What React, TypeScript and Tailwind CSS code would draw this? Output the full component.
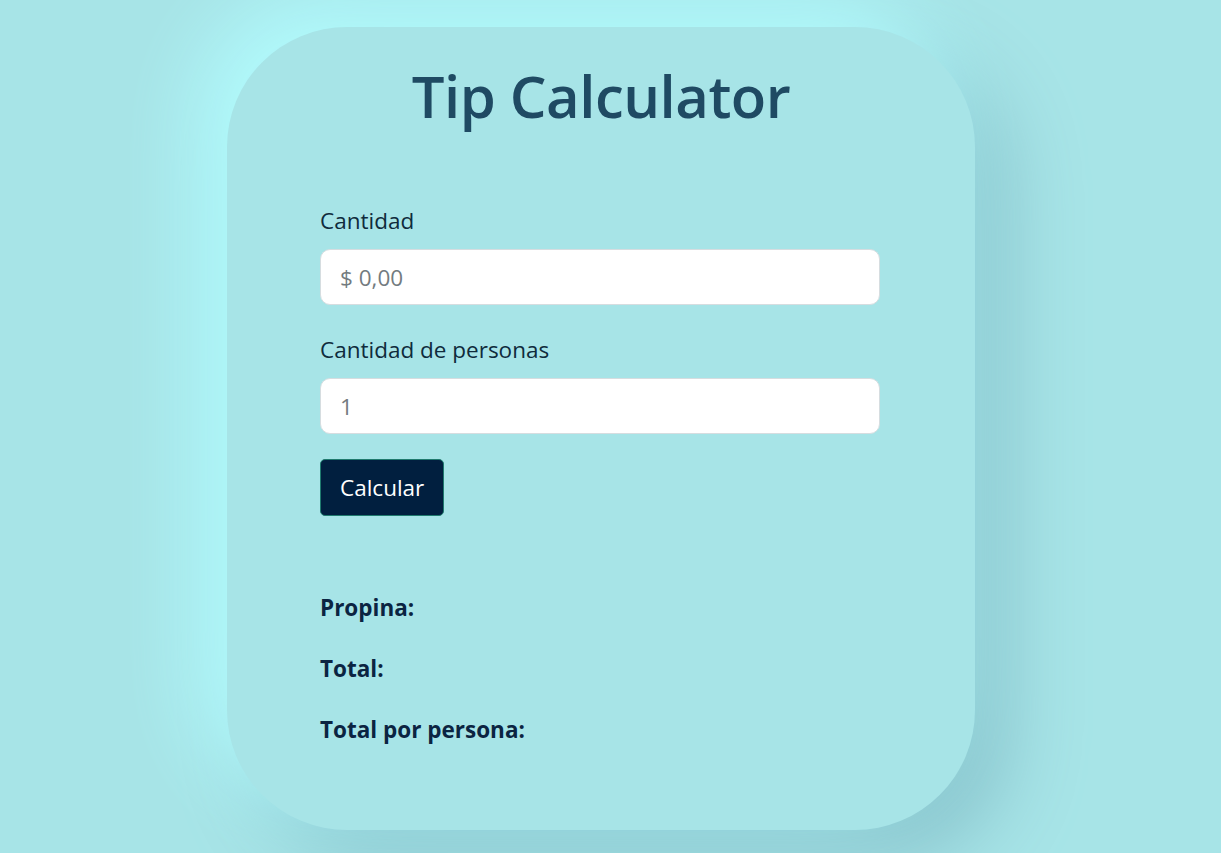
export default function App() {
  return (
    <div
      className="min-h-[853px] w-full bg-[#a7e4e7] pt-[27px] pb-[23px] overflow-hidden"
      style={{ fontFamily: '"Open Sans", "Noto Sans", sans-serif' }}
    >
      <div className="ml-[227px] w-[748px] h-[803px] rounded-[120px] bg-[#a7e4e7] shadow-[-30px_-30px_80px_#b2fbfd,30px_30px_80px_#87c2cb]">
        <h1 className="pt-[29px] text-center text-[58px] leading-[80px] font-semibold text-[#1f4a63] tracking-[-0.5px]">
          Tip Calculator
        </h1>

        <div className="mt-[70px] ml-[93px] w-[560px]">
          {/* Cantidad */}
          <label className="block text-[22.5px] leading-[30px] text-[#0f2b3c]">Cantidad</label>
          <input
            type="text"
            placeholder="$ 0,00"
            className="mt-[13px] block w-full h-[56px] px-[19px] bg-white border border-[#d6dde0] rounded-[10px] text-[22.5px] text-[#495057] placeholder-[#737b80] focus:outline-none"
          />

          {/* Cantidad de personas */}
          <label className="mt-[30px] block text-[22.5px] leading-[30px] text-[#0f2b3c]">
            Cantidad de personas
          </label>
          <input
            type="text"
            placeholder="1"
            className="mt-[13px] block w-full h-[56px] px-[19px] bg-white border border-[#d6dde0] rounded-[10px] text-[22.5px] text-[#495057] placeholder-[#737b80] focus:outline-none"
          />

          <button className="mt-[25px] h-[57px] px-[19px] bg-[#011f3f] border border-[#1f7a6e] rounded-[5px] text-[22.5px] text-white">
            Calcular
          </button>

          <div className="mt-[77px] space-y-[31px]">
            <p className="text-[22.5px] leading-[30px] font-bold text-[#0b2442]">Propina:</p>
            <p className="text-[22.5px] leading-[30px] font-bold text-[#0b2442]">Total:</p>
            <p className="text-[22.5px] leading-[30px] font-bold text-[#0b2442]">Total por persona:</p>
          </div>
        </div>
      </div>
    </div>
  );
}
